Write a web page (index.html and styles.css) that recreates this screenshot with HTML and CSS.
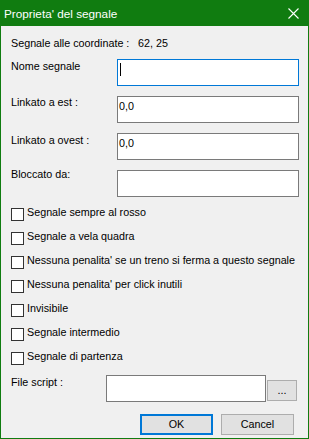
FILE: index.html
```html
<!DOCTYPE html>
<html>
  <head>
    <title>Proprieta' del segnale</title>
    <link rel="stylesheet" href="styles.css">
  </head>
  <body>
    <div class="window">
      <div class="titlebar">
        <span class="title">Proprieta' del segnale</span>
        <svg class="close" width="11" height="11" viewBox="0 0 11 11">
          <path d="M0.5 0.5 L10.5 10.5 M10.5 0.5 L0.5 10.5" stroke="#fff" stroke-width="1.1" fill="none"/>
        </svg>
      </div>

      <div class="content">
        <div class="coords">
          <span class="coords-label">Segnale alle coordinate :</span>
          <span>62, 25</span>
        </div>

        <div class="field">
          <label class="field-label">Nome segnale</label>
          <div class="textbox focused"><span class="caret"></span></div>
        </div>
        <div class="field">
          <label class="field-label up1">Linkato a est :</label>
          <div class="textbox">0,0</div>
        </div>
        <div class="field">
          <label class="field-label">Linkato a ovest :</label>
          <div class="textbox">0,0</div>
        </div>
        <div class="field">
          <label class="field-label up3">Bloccato da:</label>
          <div class="textbox"></div>
        </div>

        <div class="checks">
          <label class="check"><span class="box"></span>Segnale sempre al rosso</label>
          <label class="check"><span class="box"></span>Segnale a vela quadra</label>
          <label class="check"><span class="box"></span>Nessuna penalita' se un treno si ferma a questo segnale</label>
          <label class="check"><span class="box"></span>Nessuna penalita' per click inutili</label>
          <label class="check"><span class="box"></span>Invisibile</label>
          <label class="check"><span class="box"></span>Segnale intermedio</label>
          <label class="check"><span class="box"></span>Segnale di partenza</label>
        </div>

        <div class="file-row">
          <label class="file-label">File script :</label>
          <div class="textbox file-box"></div>
          <div class="btn browse">...</div>
        </div>

        <div class="actions">
          <div class="btn default">OK</div>
          <div class="btn">Cancel</div>
        </div>
      </div>
    </div>
  </body>
</html>
```

FILE: styles.css
```css
* { box-sizing: border-box; }
body { margin: 0; background: #f0f0f0; color: #000; font-family: "Liberation Sans", Arial, sans-serif; font-size: 10.75px; line-height: 15px; }

.window { width: 309px; height: 439px; border: 1px solid #107c10; background: #f0f0f0; }
.titlebar { height: 25px; background: #107c10; color: #fff; display: flex; align-items: center; justify-content: space-between; padding: 0 9px 0 3px; font-size: 11.75px; }
.close { display: block; }

.content { padding: 10px 0 0 10px; }

.coords { display: flex; }
.coords-label { width: 127px; }

.field { display: flex; margin-top: 10px; }
.coords + .field { margin-top: 8px; }
.field-label { flex: none; width: 106px; }
.field-label.up1 { margin-top: -1px; }
.field-label.up3 { margin-top: -3px; }

.textbox { flex: none; width: 182px; height: 27px; border: 1px solid #7a7a7a; background: #fff; padding: 2px 1px; }
.textbox.focused { border-color: #0078d7; }
.caret { display: inline-block; width: 1px; height: 13px; margin: 1px 0 0 1px; background: #000; vertical-align: top; }

.checks { margin-top: 8px; }
.check { display: flex; margin-bottom: 8px; }
.check:last-child { margin-bottom: 0; }
.box { flex: none; width: 13px; height: 13px; margin: 3px 3px 0 0; border: 1px solid #333; background: #fff; }

.file-row { display: flex; margin-top: 10px; }
.file-label { flex: none; width: 95px; }
.file-box { width: 160px; }

.btn { flex: none; width: 73px; height: 21px; border: 1px solid #adadad; background: #e1e1e1; text-align: center; line-height: 19px; }
.btn.browse { width: 30px; margin: 5px 0 0 1px; }
.btn.default { border: 2px solid #0078d7; line-height: 17px; }

.actions { display: flex; justify-content: flex-end; gap: 8px; margin-top: 12px; padding-right: 14px; }
```
